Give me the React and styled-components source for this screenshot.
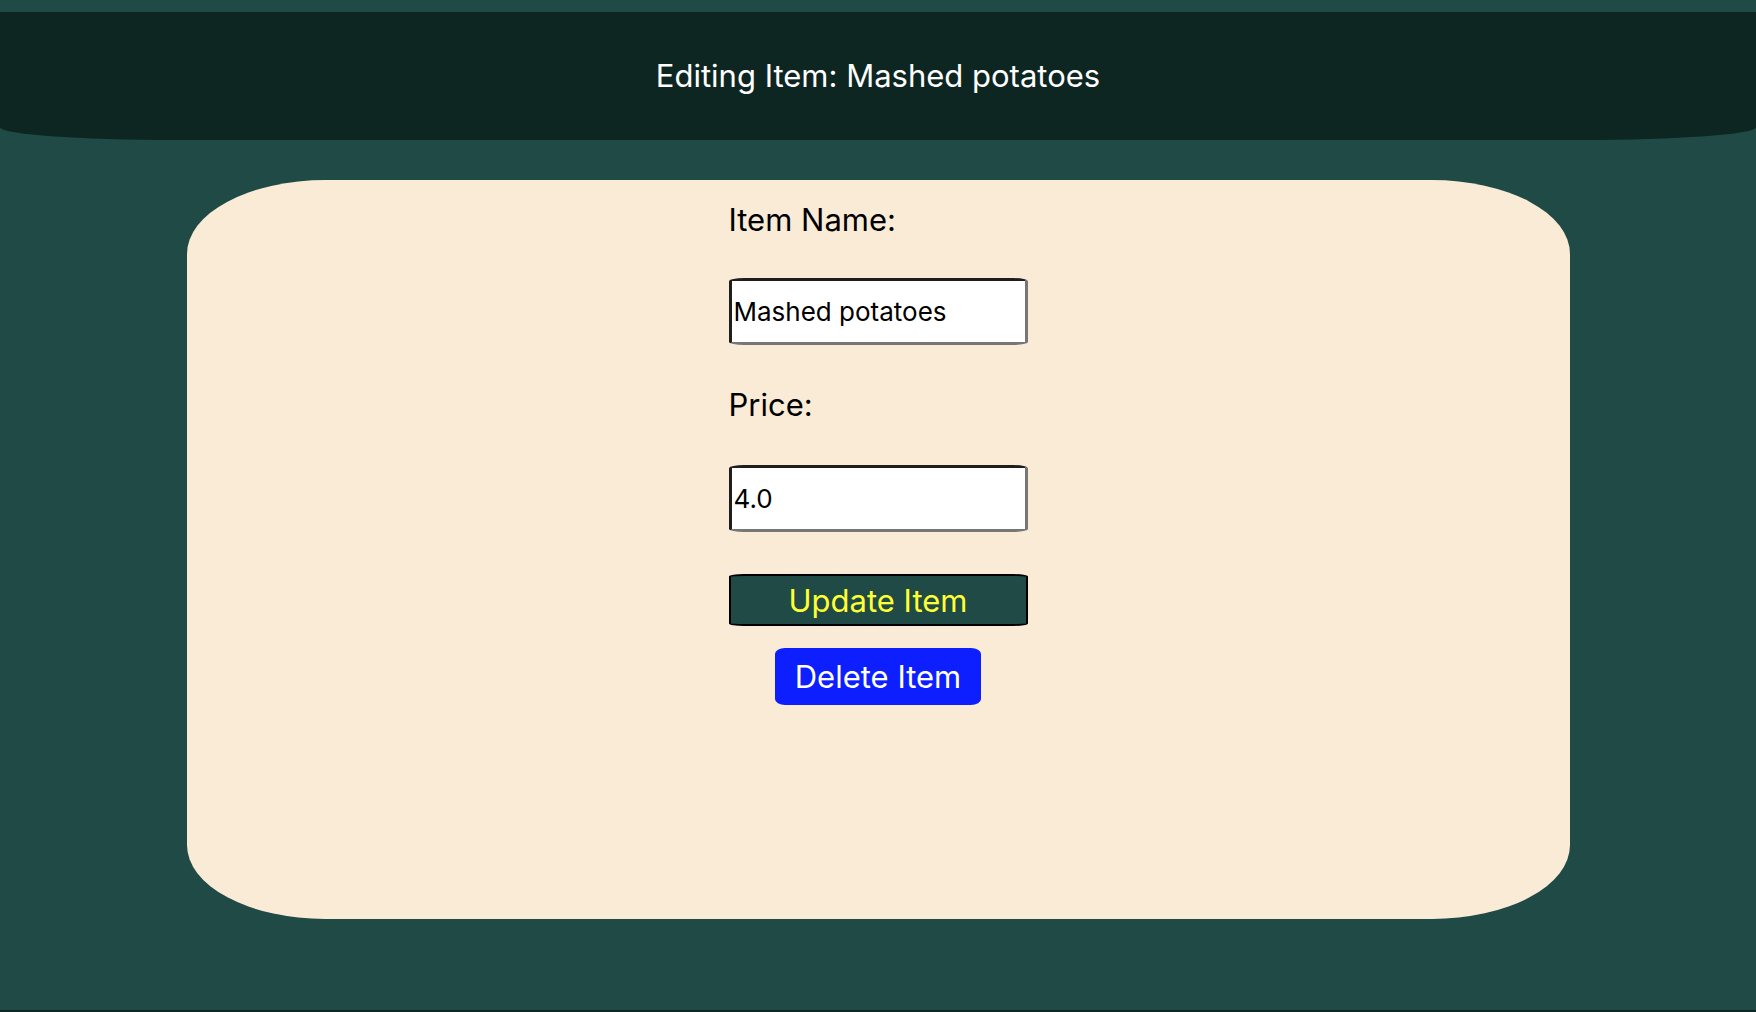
import React, { useState } from 'react'
import styled, { createGlobalStyle } from 'styled-components'

const GlobalStyle = createGlobalStyle`
  html, body {
    margin: 0;
    padding: 0;
    background-color: #1f4a45;
  }
  body {
    font-family: Inter, "Liberation Sans", Arial, sans-serif;
  }
`

const Page = styled.div`
  min-height: 1012px;
  display: flex;
  flex-direction: column;
  padding-top: 12px;
  box-sizing: border-box;
`

const Header = styled.header`
  height: 128px;
  background-color: #0e2622;
  border-radius: 0 0 10% 10%;
  display: flex;
  align-items: center;
  justify-content: center;
`

const Title = styled.h1`
  margin: 0;
  color: #ffffff;
  font-size: 31px;
  font-weight: 400;
  line-height: 36px;
`

const Card = styled.main`
  width: 1383px;
  height: 739px;
  margin: 40px auto 0;
  box-sizing: border-box;
  padding-top: 21px;
  background-color: #faebd7;
  border-radius: 10%;
  display: flex;
  justify-content: center;
`

const Form = styled.form`
  width: 299px;
  display: flex;
  flex-direction: column;
  align-items: flex-start;
`

const Label = styled.label`
  display: block;
  margin-top: ${(p) => p.$gap || 0}px;
  font-size: 31px;
  line-height: 38px;
  color: #000;
`

const Input = styled.input`
  width: 299px;
  height: 67px;
  box-sizing: border-box;
  margin: ${(p) => p.$gap || 39}px 0 0;
  padding: 0 2px;
  background: #fff;
  border: 3px solid;
  border-color: #1e1e1e #777 #777 #1e1e1e;
  border-radius: 5%;
  font-family: Inter, "Liberation Sans", Arial, sans-serif;
  font-size: 26px;
  color: #000;
  outline: none;
`

const UpdateButton = styled.button`
  width: 299px;
  height: 52px;
  margin-top: 42px;
  box-sizing: border-box;
  background-color: #1f4a45;
  border: 2px solid #000;
  border-radius: 5%;
  color: #ffff33;
  font-family: Inter, "Liberation Sans", Arial, sans-serif;
  font-size: 31px;
  cursor: pointer;
`

const DeleteButton = styled.button`
  align-self: center;
  height: 57px;
  margin-top: 22px;
  padding: 0 20px;
  box-sizing: border-box;
  background-color: #0d1fff;
  border: none;
  border-radius: 10px / 6px;
  color: #fff;
  font-family: Inter, "Liberation Sans", Arial, sans-serif;
  font-size: 31px;
  cursor: pointer;
`

const Footer = styled.footer`
  height: 2px;
  margin-top: auto;
  background-color: #0e2622;
`

export default function App() {
  const [name, setName] = useState('Mashed potatoes')
  const [price, setPrice] = useState('4.0')

  return (
    <>
      <GlobalStyle />
      <Page>
        <Header>
          <Title>Editing Item: Mashed potatoes</Title>
        </Header>
        <Card>
          <Form onSubmit={(e) => e.preventDefault()}>
            <Label htmlFor="item-name">Item Name:</Label>
            <Input id="item-name" value={name} onChange={(e) => setName(e.target.value)} />
            <Label htmlFor="item-price" $gap={41}>Price:</Label>
            <Input id="item-price" $gap={41} value={price} onChange={(e) => setPrice(e.target.value)} />
            <UpdateButton type="submit">Update Item</UpdateButton>
            <DeleteButton type="button">Delete Item</DeleteButton>
          </Form>
        </Card>
        <Footer />
      </Page>
    </>
  )
}
